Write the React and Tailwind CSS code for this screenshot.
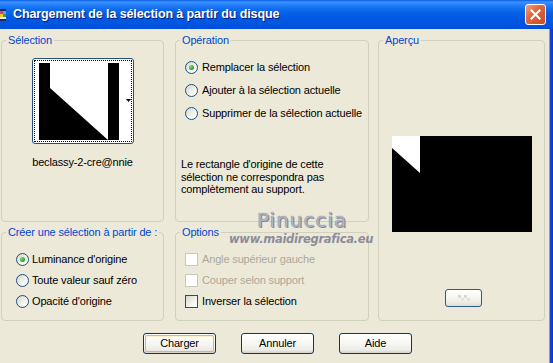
import React from "react";

function Radio({ checked }) {
  return (
    <span className="relative flex items-center justify-center w-[13px] h-[13px] rounded-full border border-[#1C5180] bg-[linear-gradient(135deg,#D6D6CE_0%,#F4F4F0_60%,#FFFFFF_100%)] shrink-0">
      {checked && (
        <span className="w-[5px] h-[5px] rounded-full bg-[radial-gradient(circle_at_35%_35%,#7EE07A_0%,#2CA82C_60%,#1F8F1F_100%)]" />
      )}
    </span>
  );
}

function Check({ disabled }) {
  return (
    <span
      className={
        disabled
          ? "w-[13px] h-[13px] border border-[#CAC8BB] bg-white shrink-0"
          : "w-[13px] h-[13px] border border-[#1C5180] bg-[linear-gradient(135deg,#D6D6CE_0%,#F2F2EE_55%,#FFFFFF_100%)] shrink-0"
      }
    />
  );
}

function Group({ label, className, children }) {
  return (
    <fieldset className={"border border-[#D0D0BF] rounded-[4px] p-0 m-0 min-w-0 " + className}>
      <legend className="ml-[4px] px-[2px] text-[#0046D5] leading-[14px] text-[11px] whitespace-nowrap">{label}</legend>
      {children}
    </fieldset>
  );
}

function XPButton({ children, def }) {
  return (
    <div className="w-[73px] h-[21px] rounded-[3px] border border-[#003C74] bg-[linear-gradient(180deg,#FFFFFF_0%,#F6F6F3_50%,#ECEBE6_85%,#D6D0C5_100%)] p-[1px]">
      <div
        className={
          "w-full h-full rounded-[2px] flex items-center justify-center text-[11px] text-black " +
          (def ? "shadow-[inset_0_0_0_1px_#F8B330,inset_0_1px_0_1px_#FFF0CF]" : "")
        }
      >
        {children}
      </div>
    </div>
  );
}

export default function App() {
  return (
    <div className="relative w-[553px] h-[363px] overflow-hidden bg-[#ECE9D8] font-['Liberation_Sans',Arial,sans-serif] text-[11px] tracking-[-0.15px] text-black flex flex-col">
      {/* Title bar */}
      <div className="h-[29px] shrink-0 flex items-center bg-[linear-gradient(180deg,#0A5CE6_0%,#3D95FF_7%,#2A83FA_14%,#1270F0_28%,#0561E6_45%,#0058E3_65%,#0055DF_85%,#004DD6_100%)]">
        <div className="w-[6px] h-[14px] ml-0 mr-[7px] relative overflow-hidden">
          <svg width="6" height="14" viewBox="0 0 6 14">
            <rect x="0" y="1" width="6" height="12" fill="#1d2b55" />
            <rect x="0" y="3" width="3" height="3" fill="#d23c8a" />
            <rect x="3" y="3" width="3" height="3" fill="#3cb4e6" />
            <rect x="0" y="6" width="3" height="3" fill="#f2c230" />
            <rect x="3" y="6" width="3" height="3" fill="#38a048" />
            <rect x="0" y="9" width="6" height="2" fill="#e8e8f0" />
          </svg>
        </div>
        <span className="text-white font-bold text-[12.5px] tracking-[-0.1px] [text-shadow:1px_1px_0_#0A1E70] font-['Liberation_Sans',Arial,sans-serif]">
          Chargement de la sélection à partir du disque
        </span>
        <div className="ml-auto mr-[7px] w-[21px] h-[21px] rounded-[3px] border border-white bg-[linear-gradient(135deg,#F0A080_0%,#E2673F_40%,#CC4A22_100%)] flex items-center justify-center">
          <svg width="11" height="11" viewBox="0 0 11 11">
            <path d="M1.5 1.5 L9.5 9.5 M9.5 1.5 L1.5 9.5" stroke="white" strokeWidth="2" strokeLinecap="square" />
          </svg>
        </div>
      </div>

      <div className="flex flex-1">
        <div className="w-[548px] flex flex-col">
          <div className="flex pt-[4px] pl-[1px]">
            {/* Left column */}
            <div className="w-[163px] flex flex-col gap-[3px]">
              <Group label="Sélection" className="h-[189px]">
                <div className="flex flex-col items-center">
                  <div className="mt-[11px] w-[102px] h-[86px] rounded-[3px] border border-[#24507F] bg-white p-[1px]">
                    <div className="w-full h-full border border-dotted border-black flex pl-[4px] pt-[2px]">
                      <svg width="80" height="77" viewBox="0 0 80 77" className="block">
                        <rect x="0" y="0" width="80" height="77" fill="#000" />
                        <polygon points="11,0 69,0 69,77 11,25" fill="#fff" />
                      </svg>
                      <div className="flex-1 relative">
                        <svg width="5" height="3" viewBox="0 0 5 3" className="absolute left-[7px] top-[36px]">
                          <polygon points="0,0 5,0 2.5,3" fill="#000" />
                        </svg>
                      </div>
                    </div>
                  </div>
                  <div className="mt-[12px] leading-[13px]">beclassy-2-cre@nnie</div>
                </div>
              </Group>
              <Group label="Créer une sélection à partir de :" className="h-[96px]">
                <div className="pl-[14px] mt-[14px] flex flex-col gap-[8px]">
                  <div className="flex items-center gap-[3px] h-[13px]">
                    <Radio checked />
                    <span>Luminance d'origine</span>
                  </div>
                  <div className="flex items-center gap-[3px] h-[13px]">
                    <Radio />
                    <span>Toute valeur sauf zéro</span>
                  </div>
                  <div className="flex items-center gap-[3px] h-[13px]">
                    <Radio />
                    <span>Opacité d'origine</span>
                  </div>
                </div>
              </Group>
            </div>

            {/* Middle column */}
            <div className="ml-[11px] w-[194px] flex flex-col gap-[3px]">
              <Group label="Opération" className="h-[189px]">
                <div className="pl-[9px] mt-[14px] flex flex-col gap-[10px]">
                  <div className="flex items-center gap-[4px] h-[13px]">
                    <Radio checked />
                    <span>Remplacer la sélection</span>
                  </div>
                  <div className="flex items-center gap-[4px] h-[13px]">
                    <Radio />
                    <span>Ajouter à la sélection actuelle</span>
                  </div>
                  <div className="flex items-center gap-[4px] h-[13px]">
                    <Radio />
                    <span>Supprimer de la sélection actuelle</span>
                  </div>
                </div>
                <p className="pl-[5px] mt-[38px] leading-[12.5px] w-[170px]">
                  Le rectangle d'origine de cette sélection ne correspondra pas complètement au support.
                </p>
              </Group>
              <Group label="Options" className="h-[96px]">
                <div className="pl-[9px] mt-[14px] flex flex-col gap-[8px]">
                  <div className="flex items-center gap-[4px] h-[13px]">
                    <Check disabled />
                    <span className="text-[#ACA899]">Angle supérieur gauche</span>
                  </div>
                  <div className="flex items-center gap-[4px] h-[13px]">
                    <Check disabled />
                    <span className="text-[#ACA899]">Couper selon support</span>
                  </div>
                  <div className="flex items-center gap-[4px] h-[13px]">
                    <Check />
                    <span>Inverser la sélection</span>
                  </div>
                </div>
              </Group>
            </div>

            {/* Right column */}
            <div className="ml-[9px] w-[167px]">
              <Group label="Aperçu" className="h-[288px]">
                <div className="pl-[13px] mt-[89px]">
                  <svg width="140" height="96" viewBox="0 0 140 96" className="block">
                    <rect x="0" y="0" width="140" height="96" fill="#000" />
                    <polygon points="0,0 28,0 28,37 0,12" fill="#fff" />
                  </svg>
                </div>
                <div className="ml-[66px] mt-[57px] w-[37px] h-[18px] rounded-[3px] border border-[#2B5A8A] bg-[linear-gradient(180deg,#FFFFFF_0%,#F3F3EE_60%,#E2DFD4_100%)] flex items-center justify-center">
                  <svg width="16" height="8" viewBox="0 0 16 8">
                    <rect x="2" y="1" width="3" height="3" fill="#D8D8D8" />
                    <rect x="8" y="1" width="3" height="3" fill="#D8D8D8" />
                    <rect x="5" y="4" width="3" height="3" fill="#E2E2E2" />
                    <rect x="11" y="4" width="3" height="3" fill="#E2E2E2" />
                  </svg>
                </div>
              </Group>
            </div>
          </div>

          {/* Buttons */}
          <div className="flex mt-[12px] ml-[143px] gap-[25px]">
            <XPButton def>Charger</XPButton>
            <XPButton>Annuler</XPButton>
            <XPButton>Aide</XPButton>
          </div>
        </div>
        <div className="flex-1 bg-[linear-gradient(90deg,#ECE9D8_0%,#ECE9D8_20%,#1C47D6_40%,#0A34D0_100%)]" />
      </div>

      {/* Watermark */}
      <div className="absolute left-[257px] top-[209px] text-[20px] leading-[22px] tracking-[1px] text-[#B4B4C0] [text-shadow:0_0_1px_#6A6A7E,1px_1px_0_#8A8A9C] font-['DejaVu_Sans',sans-serif]">
        Pinuccia
      </div>
      <div className="absolute left-[229px] top-[232px] text-[11.5px] leading-[14px] italic font-bold text-[#8C8C9C] font-['DejaVu_Sans',sans-serif] tracking-[-0.3px]">
        www.maidiregrafica.eu
      </div>
    </div>
  );
}
